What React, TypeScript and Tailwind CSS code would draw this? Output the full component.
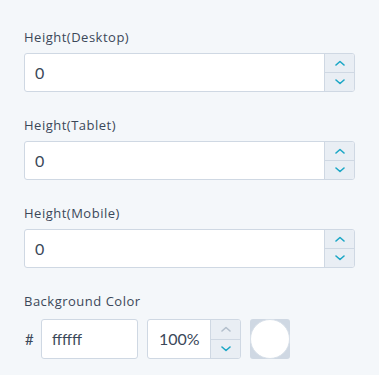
const font = { fontFamily: "Lato, 'Open Sans', sans-serif" };
const labelFont = { fontFamily: "'Open Sans', Lato, sans-serif" };

const Chevron = ({ up, muted }: { up?: boolean; muted?: boolean }) => (
  <svg width="10" height="6" viewBox="0 0 10 6" fill="none">
    <polyline
      points={up ? "1,5 5,1.5 9,5" : "1,1 5,4.5 9,1"}
      stroke={muted ? "#b3bfcc" : "#1ba7c6"}
      strokeWidth="1.6"
      strokeLinecap="round"
      strokeLinejoin="round"
    />
  </svg>
);

const Spinner = ({ upMuted }: { upMuted?: boolean }) => (
  <div className="flex w-[30px] flex-col border-l border-[#cfd8e3] bg-[#e9eef4]">
    <div className="flex flex-1 items-center justify-center border-b border-[#cfd8e3]">
      <Chevron up muted={upMuted} />
    </div>
    <div className="flex flex-1 items-center justify-center">
      <Chevron />
    </div>
  </div>
);

const Label = ({ children, className }: { children: string; className: string }) => (
  <div className={`h-5 text-[13px] leading-5 tracking-[0.5px] text-[#3b4859] ${className}`} style={labelFont}>
    {children}
  </div>
);

const HeightField = ({ label }: { label: string }) => (
  <div className="mb-[23px]">
    <Label className="mb-[6px]">{label}</Label>
    <div className="flex h-[39px] w-[331px] overflow-hidden rounded-[3px] border border-[#cfd8e3] bg-white">
      <div className="flex flex-1 items-center pl-[10px] text-[16px] text-[#3b4859]">0</div>
      <Spinner />
    </div>
  </div>
);

export default function App() {
  return (
    <div className="h-[375px] w-[380px] border-r border-[#ffffff] bg-[#f4f7fa] px-[24px] pt-[27px]" style={font}>
      <HeightField label="Height(Desktop)" />
      <HeightField label="Height(Tablet)" />
      <HeightField label="Height(Mobile)" />
      <Label className="mb-[8px]">Background Color</Label>
      <div className="flex h-[40px] items-center">
        <span className="w-[17px] pl-[1px] text-[15px] text-[#3b4859]">#</span>
        <div className="flex h-full w-[97px] items-center rounded-[3px] border border-[#cfd8e3] bg-white pl-[10px] text-[15px] text-[#3b4859]">
          ffffff
        </div>
        <div className="ml-[9px] flex h-full w-[94px] overflow-hidden rounded-[3px] border border-[#cfd8e3] bg-white">
          <div className="flex flex-1 items-center pl-[11px] text-[16px] text-[#3b4859]">100%</div>
          <Spinner upMuted />
        </div>
        <div className="relative ml-[9px] h-[40px] w-[40px] rounded-[3px] bg-[#cfd8e3]">
          <div className="absolute inset-0 rounded-full border border-[#d8e0e9] bg-white" />
        </div>
      </div>
    </div>
  );
}
